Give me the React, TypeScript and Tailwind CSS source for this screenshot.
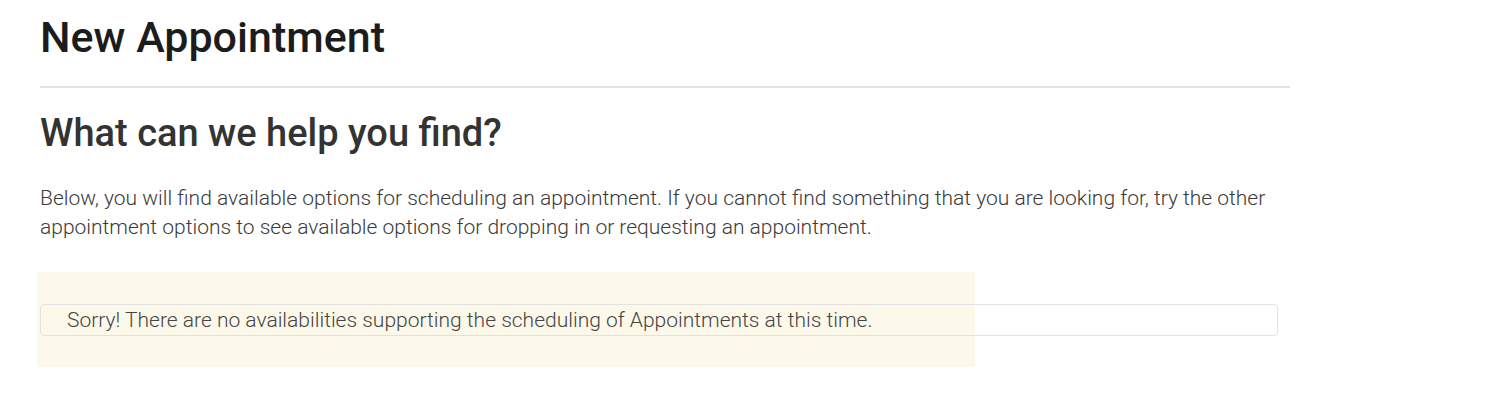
export default function App() {
  return (
    <div className="min-h-[414px] bg-white font-['Roboto',sans-serif]">
      <div className="w-[1250px] ml-[40px]">
        {/* Page title */}
        <h1 className="pt-[12px] text-[43px] leading-[50px] font-medium text-[#1c1c1c]">New Appointment</h1>
        <div className="mt-[24px] border-t-2 border-[#e4e4e4]" />

        {/* Intro */}
        <h2 className="mt-[22px] text-[38px] leading-[46px] font-medium text-[#333]">What can we help you find?</h2>
        <p className="mt-[28px] w-[1265px] text-[21px] leading-[29px] font-light text-[#3a3a3a]">
          Below, you will find available options for scheduling an appointment. If you cannot find something that you are
          looking for, try the other appointment options to see available options for dropping in or requesting an
          appointment.
        </p>

        {/* Empty state */}
        <div className="relative mt-[62px] w-[1238px]">
          <div className="absolute -left-[3px] -top-[32px] w-[938px] h-[95px] bg-[#fdf9ea]" />
          <div className="relative rounded-[4px] border border-[#e2e2e2] px-[26px] py-[5px] text-[21px] leading-[20px] font-light text-[#444]">
            Sorry! There are no availabilities supporting the scheduling of Appointments at this time.
          </div>
        </div>
      </div>
    </div>
  );
}
